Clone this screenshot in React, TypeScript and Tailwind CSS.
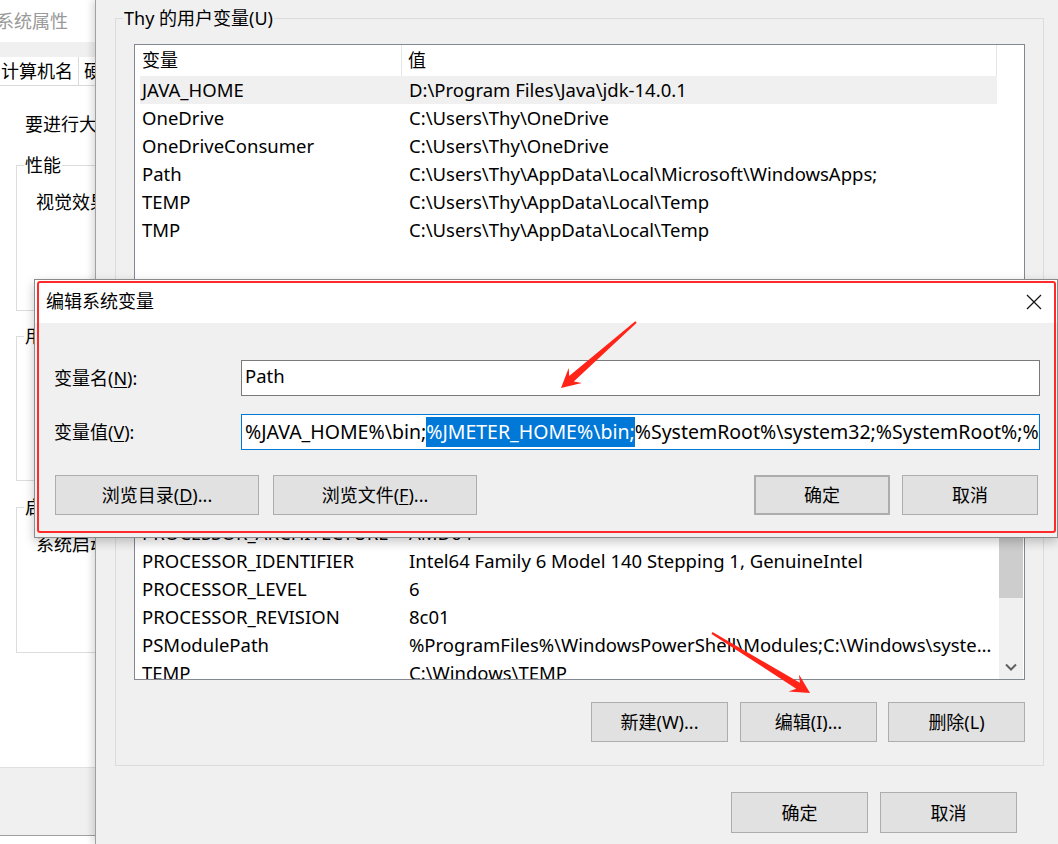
import React from "react";

type Row = { name: string; value: string; hover?: boolean };

const userVars: Row[] = [
  { name: "JAVA_HOME", value: "D:\\Program Files\\Java\\jdk-14.0.1", hover: true },
  { name: "OneDrive", value: "C:\\Users\\Thy\\OneDrive" },
  { name: "OneDriveConsumer", value: "C:\\Users\\Thy\\OneDrive" },
  { name: "Path", value: "C:\\Users\\Thy\\AppData\\Local\\Microsoft\\WindowsApps;" },
  { name: "TEMP", value: "C:\\Users\\Thy\\AppData\\Local\\Temp" },
  { name: "TMP", value: "C:\\Users\\Thy\\AppData\\Local\\Temp" },
];

const systemVars: Row[] = [
  { name: "NUMBER_OF_PROCESSORS", value: "8" },
  { name: "OS", value: "Windows_NT" },
  { name: "Path", value: "C:\\Program Files\\Common Files\\Oracle\\Java\\javapath;C:\\Windows\\system32;..." },
  { name: "PATHEXT", value: ".COM;.EXE;.BAT;.CMD;.VBS;.VBE;.JS;.JSE;.WSF;.WSH;.MSC" },
  { name: "PROCESSOR_ARCHITECTURE", value: "AMD64" },
  { name: "PROCESSOR_IDENTIFIER", value: "Intel64 Family 6 Model 140 Stepping 1, GenuineIntel" },
  { name: "PROCESSOR_LEVEL", value: "6" },
  { name: "PROCESSOR_REVISION", value: "8c01" },
  {
    name: "PSModulePath",
    value: "%ProgramFiles%\\WindowsPowerShell\\Modules;C:\\Windows\\system32\\WindowsPowerShell\\v1.0\\Modules",
  },
  { name: "TEMP", value: "C:\\Windows\\TEMP" },
  { name: "TMP", value: "C:\\Windows\\TEMP" },
];

function arrowPoints(x1: number, y1: number, x2: number, y2: number) {
  const dx = x2 - x1;
  const dy = y2 - y1;
  const len = Math.hypot(dx, dy);
  const ux = dx / len;
  const uy = dy / len;
  const nx = -uy;
  const ny = ux;
  const p = (d: number, w: number) => `${(x1 + ux * d + nx * w).toFixed(1)},${(y1 + uy * d + ny * w).toFixed(1)}`;
  return [p(0, 1), p(len - 14, 3.5), p(len - 19, 10), p(len, 0), p(len - 19, -10), p(len - 14, -3.5), p(0, -1)].join(" ");
}

function WinButton({ children, className = "" }: { children: React.ReactNode; className?: string }) {
  return (
    <div
      className={`flex items-center justify-center bg-[#e1e1e1] border border-[#adadad] text-[18px] leading-none ${className}`}
    >
      {children}
    </div>
  );
}

function ListHeader() {
  return (
    <div className="flex h-[31px] ml-[5px] w-[857px] shrink-0 items-center">
      <div className="w-[262px] h-full flex items-center pl-[2px] border-r border-[#e5e5e5]">变量</div>
      <div className="flex-1 h-full flex items-center pl-[6px] border-r border-[#e5e5e5]">值</div>
    </div>
  );
}

function ListRow({ row }: { row: Row }) {
  return (
    <div
      className={`flex h-[28px] ml-[5px] w-[857px] shrink-0 items-center text-[18.5px] ${row.hover ? "bg-[#f0f0f0]" : ""}`}
    >
      <div className="w-[262px] pl-[2px] whitespace-nowrap overflow-hidden">{row.name}</div>
      <div className="flex-1 pl-[7px] pr-[3px] whitespace-nowrap overflow-hidden text-ellipsis">{row.value}</div>
    </div>
  );
}

function BackWindow() {
  return (
    <div className="absolute left-0 top-0 w-[300px] h-[844px] flex flex-col bg-white">
      <div className="h-[42px] shrink-0 flex items-center -ml-[4px] text-[#999999]">系统属性</div>
      <div className="h-[15px] shrink-0 bg-[#f0f0f0]" />
      <div className="h-[29px] shrink-0 flex border-b border-[#d9d9d9]">
        <div className="w-[79px] border-r border-[#d9d9d9] flex items-center pl-[1px]">计算机名</div>
        <div className="flex items-center pl-[5px]">硬件</div>
      </div>
      <div className="h-[681px] shrink-0 flex flex-col">
        <div className="mt-[26px] ml-[25px] leading-[24px] whitespace-nowrap">要进行大多数更改，你必须作为管理员登录。</div>
        <fieldset className="mt-[17px] ml-[16px] w-[270px] h-[158px] border border-[#dcdcdc]">
          <legend className="ml-[7px] px-[1px] leading-[24px]">性能</legend>
          <div className="mt-[13px] ml-[19px] leading-[24px] whitespace-nowrap">视觉效果，处理器计划，内存使用，以及虚拟内存</div>
        </fieldset>
        <fieldset className="mt-[13px] ml-[16px] w-[270px] h-[157px] border border-[#dcdcdc]">
          <legend className="ml-[7px] px-[1px] leading-[24px]">用户配置文件</legend>
          <div className="mt-[13px] ml-[19px] leading-[24px] whitespace-nowrap">与登录帐户相关的桌面设置</div>
        </fieldset>
        <fieldset className="mt-[14px] ml-[16px] w-[270px] h-[158px] border border-[#dcdcdc]">
          <legend className="ml-[7px] px-[1px] leading-[24px]">启动和故障恢复</legend>
          <div className="mt-[13px] ml-[19px] leading-[24px] whitespace-nowrap">系统启动、系统故障和调试信息</div>
        </fieldset>
      </div>
      <div className="h-[69px] shrink-0 bg-[#f0f0f0] border-t border-b border-t-[#dfdfdf] border-b-[#a0a0a0]" />
    </div>
  );
}

function EnvWindow() {
  return (
    <div className="absolute left-[95px] top-0 w-[968px] h-[844px] bg-[#f0f0f0] border-l border-[#a0a0a0] shadow-[-3px_0_7px_rgba(0,0,0,0.14)] pl-[19px] pr-[19px] flex flex-col">
      <fieldset className="mt-[6px] border border-[#dcdcdc] pb-[8px]">
        <legend className="ml-[7px] px-[1px] leading-[24px]">Thy 的用户变量(U)</legend>
        <div className="mt-[14px] ml-[18px] w-[891px] h-[238px] bg-white border border-[#828790] flex flex-col overflow-hidden">
          <ListHeader />
          {userVars.map((r) => (
            <ListRow key={r.name} row={r} />
          ))}
        </div>
        <div className="mt-[10px] ml-[18px] w-[891px] flex justify-end gap-[12px]">
          <WinButton className="w-[136px] h-[39px]">新建(N)...</WinButton>
          <WinButton className="w-[136px] h-[39px]">编辑(E)...</WinButton>
          <WinButton className="w-[136px] h-[39px]">删除(D)</WinButton>
        </div>
      </fieldset>
      <fieldset className="mt-[2px] border border-[#dcdcdc] pb-[23px]">
        <legend className="ml-[7px] px-[1px] leading-[24px]">系统变量(S)</legend>
        <div className="mt-[9px] ml-[18px] w-[891px] h-[305px] bg-white border border-[#828790] flex overflow-hidden">
          <div className="flex-1 flex flex-col overflow-hidden">
            <ListHeader />
            {systemVars.map((r) => (
              <ListRow key={r.name} row={r} />
            ))}
          </div>
          <div className="w-[24px] mr-[1px] bg-[#f0f0f0] flex flex-col">
            <div className="h-[24px]" />
            <div className="mt-[60px] h-[138px] bg-[#cdcdcd]" />
            <div className="mt-auto h-[24px] flex items-center justify-center">
              <svg width="12" height="8" viewBox="0 0 12 8">
                <polyline points="1,1.5 6,6.5 11,1.5" fill="none" stroke="#606060" strokeWidth="2" />
              </svg>
            </div>
          </div>
        </div>
        <div className="mt-[22px] ml-[18px] w-[891px] flex justify-end">
          <WinButton className="w-[137px] h-[40px]">新建(W)...</WinButton>
          <WinButton className="ml-[12px] w-[137px] h-[40px]">编辑(I)...</WinButton>
          <WinButton className="ml-[11px] w-[137px] h-[40px]">删除(L)</WinButton>
        </div>
      </fieldset>
      <div className="mt-[26px] flex justify-end mr-[27px] gap-[12px]">
        <WinButton className="w-[137px] h-[41px]">确定</WinButton>
        <WinButton className="w-[137px] h-[41px]">取消</WinButton>
      </div>
    </div>
  );
}

function EditDialog() {
  return (
    <div className="absolute left-[34px] top-[279px] w-[1024px] h-[259px] border border-[#8a8a8a] bg-[#f0f0f0] shadow-[0_4px_10px_rgba(0,0,0,0.22)] flex flex-col">
      <div className="h-[43px] shrink-0 bg-white flex items-center justify-between">
        <div className="pl-[11px]">编辑系统变量</div>
        <div className="w-[46px] h-full flex items-center justify-center">
          <svg width="16" height="16" viewBox="0 0 16 16">
            <path d="M1 1 L15 15 M15 1 L1 15" stroke="#111" strokeWidth="1.2" fill="none" />
          </svg>
        </div>
      </div>
      <div className="flex-1 flex flex-col pl-[19px] pr-[17px] pt-[37px]">
        <div className="flex items-center h-[36px]">
          <div className="w-[187px] shrink-0">
            变量名(<span className="underline underline-offset-2">N</span>):
          </div>
          <div className="flex-1 h-full bg-white border border-[#7a7a7a] flex items-center pl-[3px] pb-[4px] text-[18.5px]">
            Path
          </div>
        </div>
        <div className="flex items-center h-[36px] mt-[18px]">
          <div className="w-[187px] shrink-0">
            变量值(<span className="underline underline-offset-2">V</span>):
          </div>
          <div className="flex-1 h-full bg-white border border-[#0078d7] flex items-center pl-[3px] overflow-hidden whitespace-nowrap text-[19.5px]">
            <span>%JAVA_HOME%\bin;</span>
            <span className="bg-[#0078d7] text-white">%JMETER_HOME%\bin;</span>
            <span>%SystemRoot%\system32;%SystemRoot%;%SystemRoot%\System32\Wbem;</span>
          </div>
        </div>
        <div className="flex mt-[25px] pl-[1px] pr-[2px]">
          <WinButton className="w-[204px] h-[40px]">
            浏览目录(<span className="underline underline-offset-2">D</span>)...
          </WinButton>
          <WinButton className="ml-[14px] w-[204px] h-[40px]">
            浏览文件(<span className="underline underline-offset-2">F</span>)...
          </WinButton>
          <div className="flex-1" />
          <WinButton className="w-[136px] h-[40px] border-2 border-[#0078d7]">确定</WinButton>
          <WinButton className="ml-[12px] w-[136px] h-[40px]">取消</WinButton>
        </div>
      </div>
    </div>
  );
}

export default function App() {
  return (
    <div className="relative w-[1058px] h-[844px] overflow-hidden bg-white text-black text-[18px] font-['Noto_Sans','Noto_Sans_CJK_SC',sans-serif]">
      <BackWindow />
      <EnvWindow />
      <EditDialog />
      <div className="absolute left-[37px] top-[281px] w-[1019px] h-[252px] border-2 border-[#ff2b2b] rounded-[3px] pointer-events-none" />
      <svg className="absolute inset-0 pointer-events-none" width="1058" height="844" viewBox="0 0 1058 844">
        <polygon points={arrowPoints(636, 322, 561, 388)} fill="#ff2318" />
        <polygon points={arrowPoints(712, 633, 810, 693)} fill="#ff2318" />
      </svg>
    </div>
  );
}
